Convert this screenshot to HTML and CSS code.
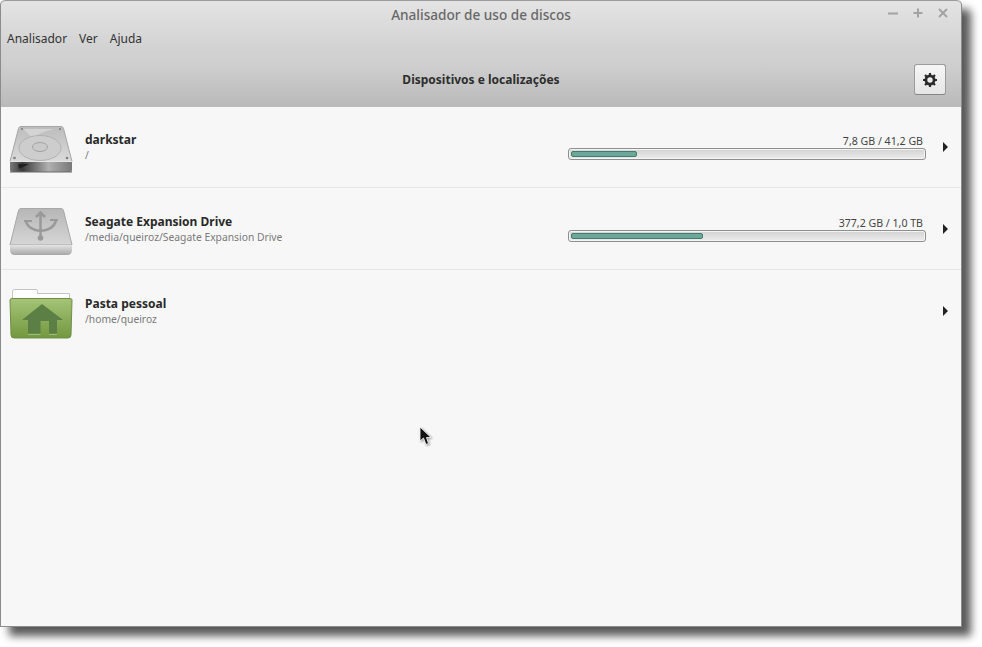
FILE: index.html
```html
<!DOCTYPE html>
<html lang="pt-BR">
<head>
    <meta charset="UTF-8">
    <meta name="viewport" content="width=device-width, initial-scale=1.0">
    <title>Analisador de uso de discos</title>
    <link rel="stylesheet" href="styles.css">
</head>
<body>
    <div class="window">
        <header class="top">
            <div class="titlebar">
                <span class="title">Analisador de uso de discos</span>
                <div class="wm-buttons">
                    <svg width="12" height="12" viewBox="0 0 12 12"><path d="M1 6.500h10" stroke="#a3a3a3" stroke-width="2"/></svg>
                    <svg width="12" height="12" viewBox="0 0 12 12"><path d="M1.500 6h9M6 1.500v9" stroke="#a3a3a3" stroke-width="2"/></svg>
                    <svg width="12" height="12" viewBox="0 0 12 12"><path d="M2 2l8 8M10 2l-8 8" stroke="#a3a3a3" stroke-width="2"/></svg>
                </div>
            </div>
            <nav class="menubar">
                <a>Analisador</a>
                <a>Ver</a>
                <a>Ajuda</a>
            </nav>
            <div class="toolbar">
                <span class="toolbar-title">Dispositivos e localizações</span>
                <button class="gear-btn">
                    <svg width="16" height="16" viewBox="0 0 16 16">
                        <circle cx="8" cy="8" r="4.200" fill="none" stroke="#2b2b2b" stroke-width="2.600"/>
                        <path d="M8 1v14M1 8h14M3 3l10 10M13 3L3 13" stroke="#2b2b2b" stroke-width="2.200"/>
                        <circle cx="8" cy="8" r="2.700" fill="#ececec"/>
                    </svg>
                </button>
            </div>
        </header>

        <main class="list">
            <div class="row">
                <svg class="row-icon" width="64" height="50" viewBox="0 0 64 50">
                    <defs>
                        <linearGradient id="hddTop" x1="0" y1="0" x2="0" y2="1"><stop offset="0" stop-color="#bcbcbc"/><stop offset="0.5" stop-color="#cbcbcb"/><stop offset="1" stop-color="#dadada"/></linearGradient>
                        <linearGradient id="hddFront" x1="0" y1="0" x2="1" y2="0"><stop offset="0" stop-color="#7a7a7a"/><stop offset="0.2" stop-color="#3a3a3a"/><stop offset="0.62" stop-color="#b0b0b0"/><stop offset="1" stop-color="#787878"/></linearGradient>
                    </defs>
                    <path d="M9.500 3.500Q10 1.500 12 1.500H52Q54 1.500 54.500 3.500L63 36.500H1Z" fill="url(#hddTop)" stroke="#a6a6a6"/>
                    <path d="M1 36H63V45Q63 47 61 47H3Q1 47 1 45Z" fill="url(#hddFront)"/>
                    <path d="M1 36.500H63" stroke="#e6e6e6"/>
                    <path d="M1 47H63" stroke="#6a6a6a"/>
                    <path d="M9 39H20L10 44Z" fill="#1f1f1f"/>
                    <path d="M14 4H45Q31 7 24 13Z" fill="#d4d4d4"/>
                    <ellipse cx="31" cy="23" rx="21" ry="12.500" fill="#cdcdcd" stroke="#b2b2b2"/>
                    <ellipse cx="31" cy="22" rx="7.500" ry="4.500" fill="#cacaca" stroke="#a2a2a2"/>
                    <circle cx="13" cy="4" r="1.100" fill="#808080"/>
                    <circle cx="51" cy="4" r="1.100" fill="#808080"/>
                    <circle cx="5.500" cy="33" r="1.300" fill="#808080"/>
                    <circle cx="58" cy="33" r="1.300" fill="#808080"/>
                </svg>
                <div class="row-text">
                    <div class="row-name">darkstar</div>
                    <div class="row-path">/</div>
                </div>
                <div class="usage">
                    <div class="usage-label">7,8 GB / 41,2 GB</div>
                    <div class="bar"><div class="bar-fill" style="width: 18.700%"></div></div>
                </div>
                <span class="arrow"></span>
            </div>

            <div class="row">
                <svg class="row-icon" width="64" height="50" viewBox="0 0 64 50">
                    <defs>
                        <linearGradient id="usbTop" x1="0" y1="0" x2="0" y2="1"><stop offset="0" stop-color="#b6b6b6"/><stop offset="1" stop-color="#d6d6d6"/></linearGradient>
                        <linearGradient id="usbFront" x1="0" y1="0" x2="0" y2="1"><stop offset="0" stop-color="#e4e4e4"/><stop offset="1" stop-color="#a6a6a6"/></linearGradient>
                    </defs>
                    <path d="M9.500 3.500Q10 1.500 12 1.500H52Q54 1.500 54.500 3.500L63 38H1Z" fill="url(#usbTop)" stroke="#a8a8a8"/>
                    <path d="M1 38H63V43Q63 48 58 48H6Q1 48 1 43Z" fill="url(#usbFront)"/>
                    <path d="M31.500 7V31M17 15Q20 23 31.500 24Q44 23 47 14M27 10L31.500 5.500L36 10" fill="none" stroke="#999999" stroke-width="2.500"/>
                    <path d="M15 14H23M41 13H49" stroke="#999999" stroke-width="2"/>
                    <circle cx="31.500" cy="31" r="2.800" fill="#999999"/>
                </svg>
                <div class="row-text">
                    <div class="row-name">Seagate Expansion Drive</div>
                    <div class="row-path">/media/queiroz/Seagate Expansion Drive</div>
                </div>
                <div class="usage">
                    <div class="usage-label">377,2 GB / 1,0 TB</div>
                    <div class="bar"><div class="bar-fill" style="width: 37.500%"></div></div>
                </div>
                <span class="arrow"></span>
            </div>

            <div class="row">
                <svg class="row-icon" width="64" height="52" viewBox="0 0 64 52">
                    <defs>
                        <linearGradient id="folder" x1="0" y1="0" x2="0" y2="1"><stop offset="0" stop-color="#a5c477"/><stop offset="1" stop-color="#72983f"/></linearGradient>
                    </defs>
                    <path d="M3.500 12V3.500Q3.500 1.500 5.500 1.500H27Q28.500 1.500 28.500 3.500V5.500H60.500V12Z" fill="#ffffff" stroke="#c4c4c4"/>
                    <path d="M1 12Q1 10.500 3 10.500H61Q63 10.500 63 12L62 47Q62 50 59 50H5Q2 50 2 47Z" fill="url(#folder)" stroke="#6f8f48"/>
                    <path d="M33 16L54 32H48V45.500H40V33H31.500V45.500H19V32H13Z" fill="#5b7f44"/>
                    <path d="M19 46.500H31.500M40 46.500H48" stroke="#9dbb78"/>
                </svg>
                <div class="row-text">
                    <div class="row-name">Pasta pessoal</div>
                    <div class="row-path">/home/queiroz</div>
                </div>
                <span class="arrow"></span>
            </div>
        </main>
    </div>

    <svg class="cursor" width="13" height="20" viewBox="0 0 13 20">
        <path d="M1 1V15L4.500 12L7 18.500L9.500 17.500L7.500 11.500H12Z" fill="#111111" stroke="#ffffff" stroke-width="0.800"/>
    </svg>
</body>
</html>
```

FILE: styles.css
```css
body {
    margin: 0;
    width: 982px;
    height: 647px;
    background-color: #fff;
    font-family: "Noto Sans", sans-serif;
    color: #2e2e2e;
}

.window {
    width: 962px;
    height: 627px;
    box-sizing: border-box;
    border-left: 1px solid #8c8c8c;
    border-right: 1px solid #8c8c8c;
    border-bottom: 1px solid #8c8c8c;
    border-radius: 5px 5px 0 0;
    background-color: #f7f7f7;
    box-shadow: 9px 9px 9px rgba(0, 0, 0, 0.65);
    display: flex;
    flex-direction: column;
}

.top {
    height: 107px;
    background: linear-gradient(#e4e4e4, #d2d2d2 45%, #cfcfcf 60%, #b9b9b9);
    border-top: 1px solid #9a9a9a;
    box-sizing: border-box;
    border-radius: 5px 5px 0 0;
}

.titlebar {
    height: 26px;
    display: flex;
    align-items: center;
    justify-content: center;
    position: relative;
}

.title {
    font-size: 13.600px;
    font-weight: 500;
    color: #686868;
}

.wm-buttons {
    position: absolute;
    right: 12px;
    top: 6px;
    display: flex;
    gap: 13px;
}

.menubar {
    height: 23px;
    display: flex;
    align-items: center;
    gap: 12px;
    padding-left: 6px;
    font-size: 12px;
    color: #333;
}

.toolbar {
    height: 57px;
    padding-top: 2px;
    display: flex;
    align-items: center;
    justify-content: center;
    position: relative;
    box-sizing: border-box;
}

.toolbar-title {
    font-size: 12px;
    font-weight: bold;
    color: #2e2e2e;
}

.gear-btn {
    position: absolute;
    right: 15px;
    top: 14px;
    width: 32px;
    height: 31px;
    padding: 0;
    display: flex;
    align-items: center;
    justify-content: center;
    border: 1px solid #9c9c9c;
    border-bottom-color: #858585;
    border-radius: 3px;
    background: linear-gradient(#f6f6f6, #e6e6e6);
}

.list {
    flex-grow: 1;
}

.row {
    height: 82px;
    box-sizing: border-box;
    border-bottom: 1px solid #e6e6e6;
    display: flex;
    align-items: center;
    padding-left: 8px;
}

.row:first-child {
    height: 81px;
}

.row:last-child {
    border-bottom-color: transparent;
}

.row-icon {
    flex-shrink: 0;
    margin-top: 6px;
}

.row-text {
    margin-left: 12px;
    flex-grow: 1;
}

.row:first-child .row-text {
    padding-bottom: 2px;
}

.row-name {
    font-size: 12px;
    font-weight: bold;
    line-height: 17px;
    color: #2a2a2a;
}

.row-path {
    font-size: 10.300px;
    line-height: 14px;
    color: #7a7a7a;
}

.usage {
    width: 358px;
}

.usage-label {
    font-size: 10.600px;
    line-height: 14px;
    text-align: right;
    padding-right: 3px;
    color: #444;
}

.bar {
    height: 12px;
    box-sizing: border-box;
    border: 1px solid #8f8f8f;
    border-radius: 3px;
    padding: 2px;
    background: linear-gradient(#d2d2d2, #ececec);
    box-shadow: inset 0 0 0 1px #f4f4f4;
}

.bar-fill {
    height: 100%;
    box-sizing: border-box;
    background-color: #6ca899;
    border: 1px solid #477a6e;
    border-radius: 2px;
}

.arrow {
    width: 0;
    height: 0;
    margin-left: 17px;
    margin-right: 13px;
    border-left: 5px solid #222;
    border-top: 5px solid transparent;
    border-bottom: 5px solid transparent;
}

.row:last-child .arrow {
    margin-left: auto;
}

.cursor {
    position: absolute;
    left: 419px;
    top: 426px;
    filter: drop-shadow(1px 1px 1px rgba(0, 0, 0, 0.4));
}
```
